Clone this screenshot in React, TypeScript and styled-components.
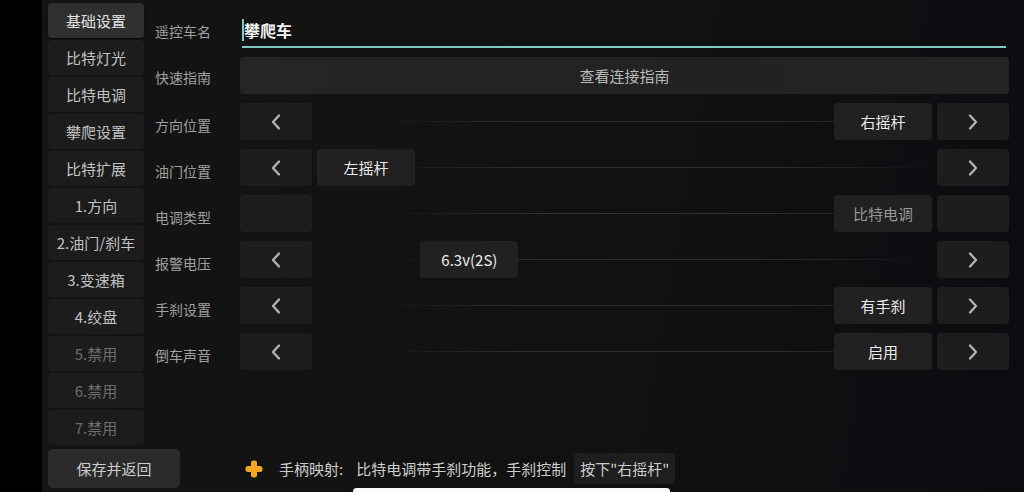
import React from "react"
import styled, { createGlobalStyle } from "styled-components"

const GlobalStyle = createGlobalStyle`
  html, body {
    margin: 0;
    padding: 0;
    background: #000;
  }
  body {
    font-family: "Noto Sans CJK SC", "Noto Sans", sans-serif;
  }
  * {
    box-sizing: border-box;
  }
`

const Screen = styled.div`
  position: relative;
  display: flex;
  width: 1024px;
  height: 492px;
  overflow: hidden;
  background: #000;
`

const Bezel = styled.div`
  width: 42px;
  flex: none;
  background: #000;
`

const Panel = styled.div`
  flex: 1;
  display: grid;
  grid-template-rows: 447px 1fr;
  background: linear-gradient(100deg, #141414 0%, #121212 45%, #0f0f12 80%, #0c0c10 100%);
`

const Top = styled.div`
  display: flex;
  padding-left: 6px;
`

const Sidebar = styled.div`
  display: flex;
  flex-direction: column;
  gap: 2px;
  width: 96px;
  padding-top: 3px;
`

const NavButton = styled.div<{ $active?: boolean; $disabled?: boolean }>`
  height: 35px;
  display: flex;
  align-items: center;
  justify-content: center;
  border-radius: 4px;
  font-size: 15px;
  background: ${p => (p.$active ? "#2f2f2f" : "#1c1c1c")};
  color: ${p => (p.$active ? "#e2e2e2" : p.$disabled ? "#6f6f6f" : "#c2c2c2")};
  box-shadow: ${p => (p.$active ? "0 1px 2px rgba(0,0,0,0.6)" : "none")};
`

const Settings = styled.div`
  display: grid;
  grid-template-columns: 85px 769px;
  grid-auto-rows: 37px;
  row-gap: 9px;
  margin-left: 11px;
  padding-top: 11px;
`

const Label = styled.div<{ $shift?: number }>`
  display: flex;
  align-items: center;
  padding-top: ${p => p.$shift ?? 6}px;
  font-size: 14px;
  color: #a0a0a0;
`

const NameField = styled.div`
  display: flex;
  align-items: center;
  margin: 0 3px 0 2px;
  padding-top: 2px;
  border-bottom: 2px solid #7ccdbd;
  font-size: 16px;
  font-weight: 700;
  color: #f2f2f2;
`

const Caret = styled.span`
  width: 2px;
  height: 22px;
  background: #7ccdbd;
`

const GuideButton = styled.div`
  display: flex;
  align-items: center;
  justify-content: center;
  border-radius: 4px;
  background: linear-gradient(90deg, #252525, #232222 60%, #252323);
  font-size: 15px;
  color: #bababa;
`

const Row = styled.div`
  display: flex;
`

const ArrowButton = styled.div`
  width: 72px;
  flex: none;
  display: flex;
  align-items: center;
  justify-content: center;
  border-radius: 4px;
  background: #1d1d1d;
  color: #b4b4b4;
`

const Track = styled.div`
  position: relative;
  flex: 1;
  margin: 0 5px;
  &::before {
    content: "";
    position: absolute;
    left: 0;
    right: 0;
    top: 18px;
    height: 1px;
    background: linear-gradient(90deg, rgba(255,255,255,0) 10%, rgba(255,255,255,0.13) 35%, rgba(255,255,255,0.13) 75%, rgba(255,255,255,0) 100%);
  }
`

const Thumb = styled.div<{ $muted?: boolean }>`
  position: absolute;
  top: 0;
  width: 98px;
  height: 37px;
  display: flex;
  align-items: center;
  justify-content: center;
  border-radius: 4px;
  background: #212121;
  font-size: 15px;
  color: ${p => (p.$muted ? "#979797" : "#ececec")};
`

const Bottom = styled.div`
  display: flex;
  align-items: center;
  align-self: start;
  padding: 2px 0 0 6px;
`

const SaveButton = styled.div`
  width: 132px;
  height: 39px;
  display: flex;
  align-items: center;
  justify-content: center;
  border-radius: 5px;
  background: #2b2b2b;
  font-size: 15px;
  color: #cdcdcd;
`

const Hint = styled.div`
  display: flex;
  align-items: center;
  margin-left: 65px;
  font-size: 15px;
  color: #cdcdcd;
`

const HintKey = styled.span`
  margin-left: 16px;
  margin-right: 13px;
`

const Chip = styled.span`
  margin-left: 8px;
  height: 31px;
  padding: 0 6px;
  display: flex;
  align-items: center;
  border-radius: 4px;
  background: #1e1e1e;
`

const HomeBar = styled.div`
  position: absolute;
  left: 353px;
  width: 317px;
  bottom: -3px;
  height: 7px;
  border-radius: 4px;
  background: #fafafa;
`

const Chevron: React.FC<{ dir: "left" | "right" }> = ({ dir }) => (
  <svg width="10" height="16" viewBox="0 0 10 16">
    <polyline
      points={dir === "left" ? "8,1.5 2,8 8,14.5" : "2,1.5 8,8 2,14.5"}
      fill="none"
      stroke="currentColor"
      strokeWidth="2.3"
      strokeLinecap="round"
      strokeLinejoin="round"
    />
  </svg>
)

const PlusIcon = () => (
  <svg width="18" height="18" viewBox="0 0 18 18">
    <rect x="6" y="0.5" width="6" height="17" rx="2.5" fill="#f5a623" />
    <rect x="0.5" y="6" width="17" height="6" rx="2.5" fill="#f5a623" />
  </svg>
)

const nav = [
  { name: "基础设置", active: true },
  { name: "比特灯光" },
  { name: "比特电调" },
  { name: "攀爬设置" },
  { name: "比特扩展" },
  { name: "1.方向" },
  { name: "2.油门/刹车" },
  { name: "3.变速箱" },
  { name: "4.绞盘" },
  { name: "5.禁用", disabled: true },
  { name: "6.禁用", disabled: true },
  { name: "7.禁用", disabled: true },
]

type Setting = {
  label: string
  options: string[]
  index: number
  prev: boolean
  next: boolean
  muted?: boolean
}

const settings: Setting[] = [
  { label: "方向位置", options: ["左摇杆", "右摇杆"], index: 1, prev: true, next: true },
  { label: "油门位置", options: ["左摇杆", "右摇杆"], index: 0, prev: true, next: true },
  { label: "电调类型", options: ["比特电调"], index: 0, prev: false, next: false, muted: true },
  {
    label: "报警电压",
    options: ["关闭", "6.3v(2S)", "7.0v(2S)", "9.5v(3S)", "10.5v(3S)", "自定义"],
    index: 1,
    prev: true,
    next: true,
  },
  { label: "手刹设置", options: ["无手刹", "有手刹"], index: 1, prev: true, next: true },
  { label: "倒车声音", options: ["关闭", "启用"], index: 1, prev: true, next: true },
]

const SettingRow: React.FC<{ s: Setting }> = ({ s }) => {
  const ratio = s.options.length > 1 ? s.index / (s.options.length - 1) : 1
  return (
    <Row>
      <ArrowButton>{s.prev && <Chevron dir="left" />}</ArrowButton>
      <Track>
        <Thumb $muted={s.muted} style={{ left: `calc((100% - 98px) * ${ratio})` }}>
          {s.options[s.index]}
        </Thumb>
      </Track>
      <ArrowButton>{s.next && <Chevron dir="right" />}</ArrowButton>
    </Row>
  )
}

export default function App() {
  return (
    <>
      <GlobalStyle />
      <Screen>
        <Bezel />
        <Panel>
          <Top>
            <Sidebar>
              {nav.map(n => (
                <NavButton key={n.name} $active={n.active} $disabled={n.disabled}>
                  {n.name}
                </NavButton>
              ))}
            </Sidebar>
            <Settings>
              <Label $shift={2}>遥控车名</Label>
              <NameField>
                <Caret />
                攀爬车
              </NameField>
              <Label $shift={3}>快速指南</Label>
              <GuideButton>查看连接指南</GuideButton>
              {settings.map(s => (
                <React.Fragment key={s.label}>
                  <Label>{s.label}</Label>
                  <SettingRow s={s} />
                </React.Fragment>
              ))}
            </Settings>
          </Top>
          <Bottom>
            <SaveButton>保存并返回</SaveButton>
            <Hint>
              <PlusIcon />
              <HintKey>手柄映射:</HintKey>
              比特电调带手刹功能，手刹控制
              <Chip>按下"右摇杆"</Chip>
            </Hint>
          </Bottom>
        </Panel>
        <HomeBar />
      </Screen>
    </>
  )
}
